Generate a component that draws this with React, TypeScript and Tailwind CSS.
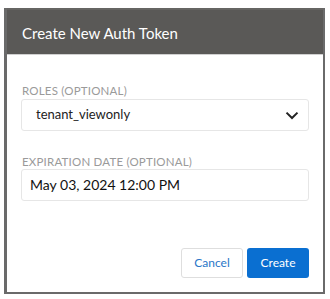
import React from "react";

export default function App() {
  return (
    <div className="w-[330px] h-[299px] bg-white pt-[8px] pl-[4px]" style={{ fontFamily: "Lato, 'Open Sans', sans-serif" }}>
      <div className="w-[321px] h-[286px] flex flex-col border-l-[3px] border-r-[2px] border-b-[2px] border-[#6a6a6a] bg-white">
        <div className="h-[47px] bg-[#5a5957] border-t-[2px] border-[#666563] border-b border-b-[#d0d0d0] flex items-center pl-[15px]">
          <span className="text-white text-[15px] leading-none mt-[2px]">Create New Auth Token</span>
        </div>
        <div className="flex flex-col px-[14px] pt-[30px]">
          <div className="text-[#9a9a9a] text-[11.5px] leading-none tracking-[0.2px] pl-[1px]">ROLES (OPTIONAL)</div>
          <div className="mt-[2px] h-[32px] w-[288px] border border-[#e6e6e6] rounded-[3px] flex items-center justify-between pl-[14px] pr-[9px]">
            <span className="text-[#222] text-[13px] leading-none">tenant_viewonly</span>
            <svg width="14" height="9" viewBox="0 0 14 9" className="mt-[1px]">
              <path d="M1.5 1.6 L7 7 L12.5 1.6" fill="none" stroke="#222" strokeWidth="2" />
            </svg>
          </div>
          <div className="mt-[25px] text-[#9a9a9a] text-[11.5px] leading-none tracking-[0.2px] pl-[1px]">EXPIRATION DATE (OPTIONAL)</div>
          <div className="mt-[2px] h-[32px] w-[288px] border border-[#e6e6e6] rounded-[3px] flex items-center pl-[8px]">
            <span className="text-[#111] text-[14px] leading-none">May 03, 2024 12:00 PM</span>
          </div>
        </div>
        <div className="flex justify-end gap-[4px] pr-[14px] mt-[47px]">
          <button className="w-[62px] h-[30px] border border-[#dedede] rounded-[3px] bg-white text-[#2a76c8] text-[12px]">Cancel</button>
          <button className="w-[62px] h-[30px] rounded-[3px] bg-[#0a6fd1] text-white text-[12px]">Create</button>
        </div>
      </div>
    </div>
  );
}
